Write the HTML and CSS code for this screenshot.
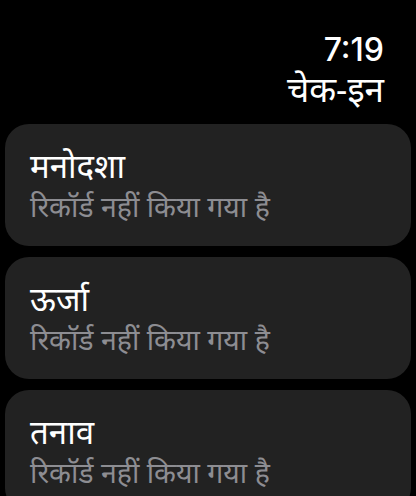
FILE: index.html
```html
<!DOCTYPE html>
<html lang="hi">
<head>
<meta charset="utf-8">
<link rel="stylesheet" href="styles.css">
</head>
<body>
<div class="screen">
  <header class="header">
    <div class="time">7:19</div>
    <div class="title">चेक-इन</div>
  </header>
  <div class="list">
    <div class="card">
      <div class="card-title">मनोदशा</div>
      <div class="card-sub">रिकॉर्ड नहीं किया गया है</div>
    </div>
    <div class="card">
      <div class="card-title">ऊर्जा</div>
      <div class="card-sub">रिकॉर्ड नहीं किया गया है</div>
    </div>
    <div class="card">
      <div class="card-title">तनाव</div>
      <div class="card-sub">रिकॉर्ड नहीं किया गया है</div>
    </div>
  </div>
</div>
</body>
</html>
```
FILE: styles.css
```css
html, body {
  margin: 0;
  padding: 0;
  background: #000;
}
body {
  font-family: "Noto Sans", "Inter", "DejaVu Sans", sans-serif;
  color: #fff;
  width: 416px;
  height: 496px;
  overflow: hidden;
}
.screen {
  display: flex;
  flex-direction: column;
}
.header {
  display: flex;
  flex-direction: column;
  align-items: flex-end;
  gap: 4px;
  padding: 33px 32px 0 0;
  height: 124px;
  box-sizing: border-box;
}
.time {
  font-family: "Inter", "Roboto", sans-serif;
  font-size: 32px;
  line-height: 34px;
  font-weight: 500;
}
.title {
  font-size: 35px;
  line-height: 36px;
  font-weight: 400;
}
.list {
  display: flex;
  flex-direction: column;
  gap: 11px;
  padding: 0 5px;
}
.card {
  background: #222222;
  border-radius: 24px;
  height: 122px;
  box-sizing: border-box;
  padding: 22px 25px 0 25px;
  display: flex;
  flex-direction: column;
}
.card-title {
  font-size: 33px;
  line-height: 40px;
  font-weight: 400;
}
.card-sub {
  font-size: 28.5px;
  line-height: 40px;
  color: #8d8d92;
}
```
